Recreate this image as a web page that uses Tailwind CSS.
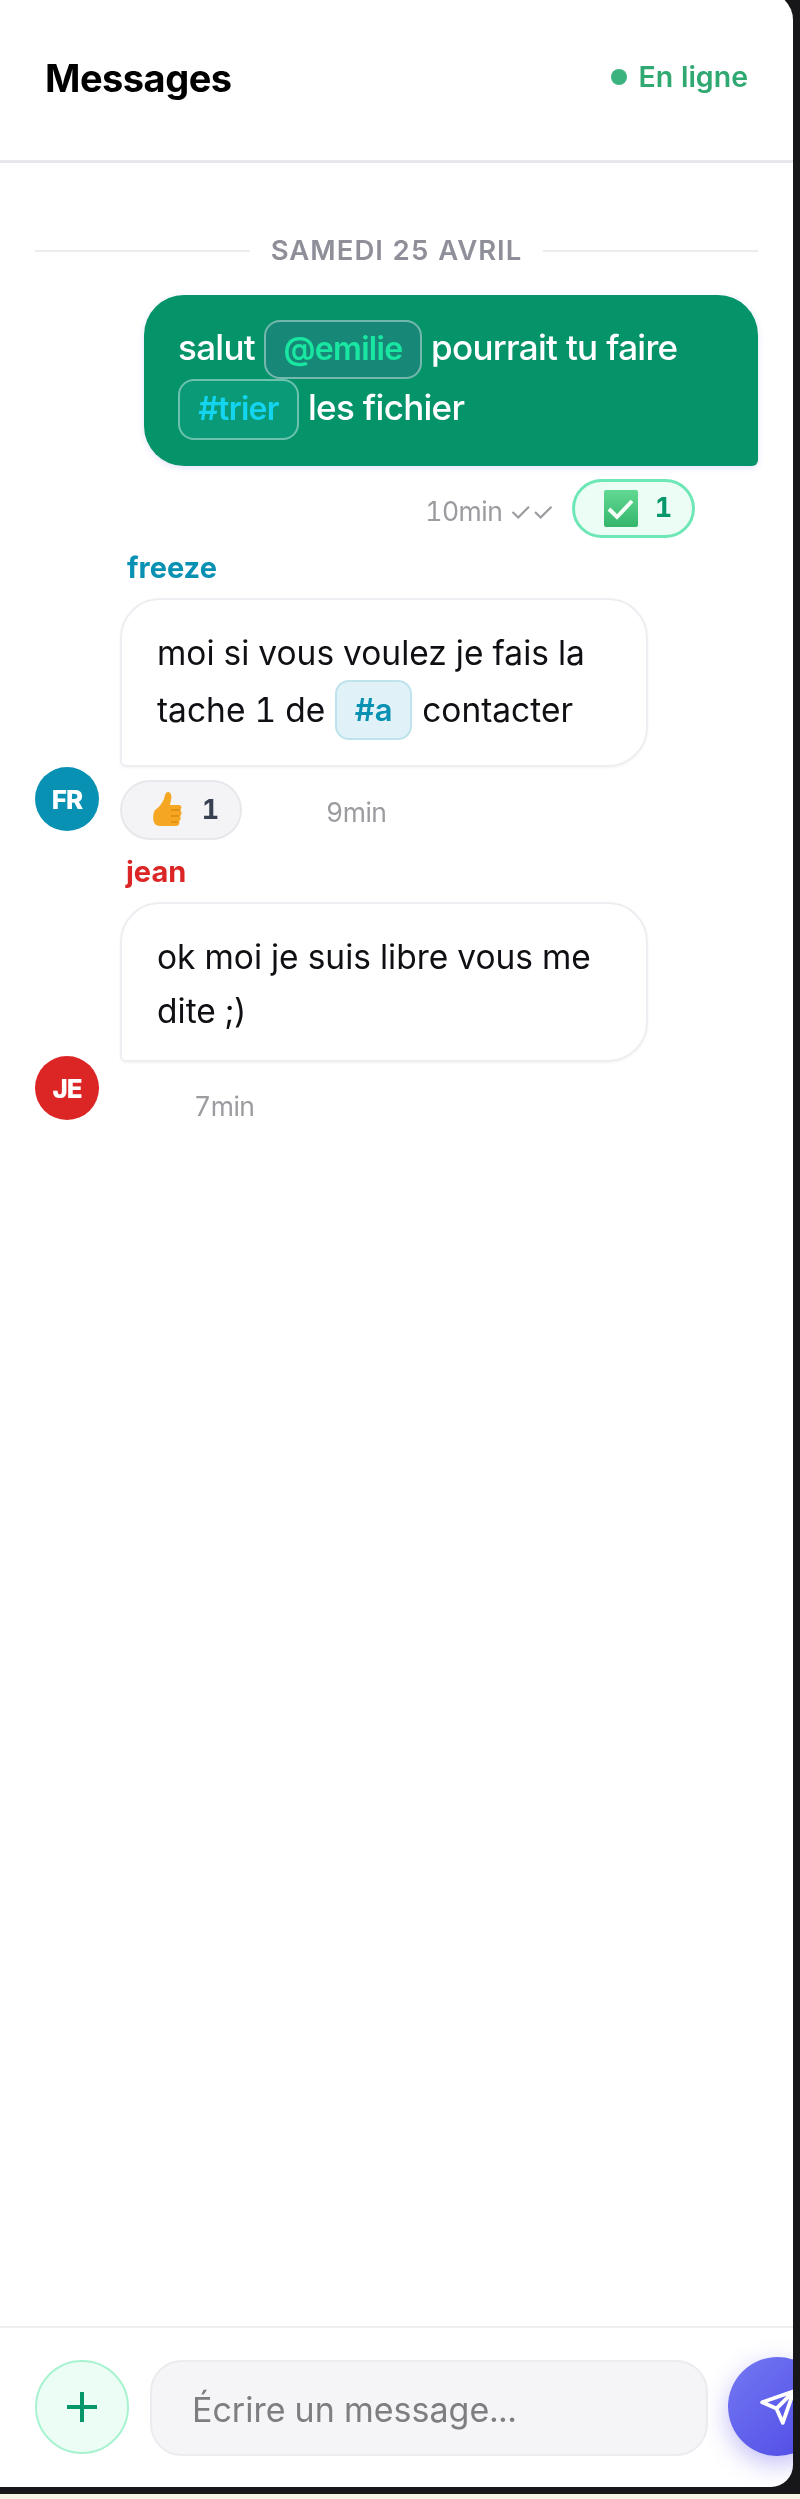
<!DOCTYPE html>
<html lang="en">
<head>
  <meta charset="UTF-8" />
  <title>Messages</title>
  <script src="https://cdn.jsdelivr.net/npm/@tailwindcss/browser@4"></script>
</head>
<body class="bg-[#f4f4e4] font-['Inter',sans-serif] tabular-nums">
 <div class="w-[800px] h-[2499px] overflow-hidden">
  <!-- frame runs past the window on the top and left so the blur has no pale fringe there -->
  <div class="-mt-[8px] -ml-[8px] h-[2502px] w-[816px] bg-[#17171a] blur-[0.7px]">
    <div class="h-[2495px] w-[801px] pt-[8px] pl-[8px] bg-white rounded-tr-[28px] rounded-br-[22px] flex flex-col overflow-hidden">

      <!-- Header -->
      <header class="h-[163px] shrink-0 border-b-[3px] border-[#e8e8ec] pl-[45px] pr-[45px] pb-[3px] flex items-center justify-between">
        <h1 class="text-[38px] font-bold text-black tracking-[-0.5px]">Messages</h1>
        <div class="flex items-center gap-[12px] -mt-[3px] text-[#2fa871] text-[28.5px] font-semibold">
          <span class="w-[16px] h-[16px] rounded-full bg-[#3bb37f]"></span>
          En ligne
        </div>
      </header>

      <!-- Messages -->
      <main class="flex-1 px-[35px] pt-[72px]">
        <div class="flex items-center gap-[21px] h-[32px]">
          <div class="flex-1 h-[2px] bg-[#ececf0]"></div>
          <span class="text-[27.5px] font-semibold tracking-[1px] text-[#8f8f99]">SAMEDI 25 AVRIL</span>
          <div class="flex-1 h-[2px] bg-[#ececf0]"></div>
        </div>

        <!-- mine -->
        <div class="flex flex-col items-end mt-[28px]">
          <div class="w-[614px] h-[171px] pl-[34px] pr-[20px] pt-[22px] bg-[#05946a] rounded-[40px] rounded-br-[6px] text-white text-[35px] font-medium leading-[60px] tracking-[-0.7px] shadow-[0_2px_6px_rgba(99,102,241,0.18)]">
            <div class="flex items-center gap-[9px] h-[60px] whitespace-nowrap">salut
              <span class="mt-[4px] inline-flex items-center justify-center w-[158px] h-[59px] rounded-[16px] border-2 border-white/40 bg-[#178877] text-[#19e6a0] text-[32px] font-semibold">@emilie</span>
              pourrait tu faire</div>
            <div class="flex items-center gap-[9px] h-[60px] whitespace-nowrap">
              <span class="mt-[4px] inline-flex items-center justify-center w-[121px] h-[61px] rounded-[16px] border-2 border-white/40 bg-[#0b9a78] text-[#14d4f0] text-[32px] font-semibold">#trier</span>
              les fichier</div>
          </div>
          <div class="flex items-center mt-[13px] pr-[63px]">
            <span class="text-[26.5px] tracking-[-0.5px] text-[#9b9ba0] mr-[18px] pt-[7px]">10min <span class="text-[26px]">✓✓</span></span>
            <div class="w-[123px] h-[59px] pl-[9px] rounded-full border-[3px] border-[#6ee7b7] bg-[#ecfdf5] flex items-center justify-center gap-[17px]">
              <svg class="w-[34px] h-[37px]" viewBox="0 0 34 37">
                <defs><linearGradient id="chk" x1="0" y1="0" x2="0" y2="1"><stop offset="0" stop-color="#62d992"/><stop offset="1" stop-color="#35b56c"/></linearGradient></defs>
                <rect width="34" height="37" rx="2" fill="url(#chk)"/>
                <path d="M5 19l8 8L28 11" fill="none" stroke="#f4fff8" stroke-width="4"/>
              </svg>
              <span class="text-[27px] font-bold text-[#059669]">1</span>
            </div>
          </div>
        </div>

        <!-- freeze -->
        <div class="mt-[15px]">
          <div class="ml-[92px] text-[29px] leading-[30px] font-bold text-[#0891b2]">freeze</div>
          <div class="flex gap-[21px] mt-[15px]">
            <div class="w-[64px] shrink-0 flex items-start pt-[169px]">
              <div class="w-[64px] h-[64px] rounded-full bg-[#0891b2] text-white text-[26px] font-extrabold tracking-[-1px] flex items-center justify-center">FR</div>
            </div>
            <div>
              <div class="w-[528px] h-[169px] pl-[35px] pt-[26px] border-2 border-[#eeeef2] rounded-[40px] rounded-bl-[6px] text-[33.5px] leading-[54px] text-[#101014] shadow-[0_1px_3px_rgba(0,0,0,0.05)]">
                <div class="whitespace-nowrap">moi si vous voulez je fais la</div>
                <div class="flex items-center gap-[10px] whitespace-nowrap">tache 1 de
                  <span class="inline-flex items-center justify-center w-[77px] h-[60px] rounded-[14px] border-2 border-[#bfe3ec] bg-[#e0f2f7] text-[#0891b2] text-[31px] font-semibold">#a</span>
                  contacter</div>
              </div>
              <div class="flex items-center mt-[13px]">
                <div class="w-[122px] h-[60px] pl-[9px] rounded-full border-2 border-[#e8e8ec] bg-[#f4f4f6] flex items-center justify-center gap-[19px]">
                  <svg class="w-[31px] h-[38px]" viewBox="0 0 31 38">
                    <path d="M3 19c3-2 7-6 9-11 1-3 1-7 4-7 3 0 4 4 3 8l-1 5h9c3 0 3 4 1 5 2 1 2 5 0 6 1 1 1 5-1 5 1 2 0 5-3 5H12c-3 0-6 0-8-1-3-2-4-10-1-15z" fill="#f5a623"/>
                    <path d="M19 19h9M19 25h8M19 31h7" stroke="#dd8a12" stroke-width="1.5" fill="none"/>
                  </svg>
                  <span class="text-[27px] font-bold text-[#374151]">1</span>
                </div>
                <span class="ml-[84px] pt-[6px] text-[26.5px] tracking-[-0.5px] text-[#9b9ba0]">9min</span>
              </div>
            </div>
          </div>
        </div>

        <!-- jean -->
        <div class="mt-[17px]">
          <div class="ml-[91px] text-[29px] leading-[30px] font-bold text-[#dc2626]">jean</div>
          <div class="flex gap-[21px] mt-[15px]">
            <div class="w-[64px] shrink-0 pt-[154px]">
              <div class="w-[64px] h-[64px] rounded-full bg-[#dc2626] text-white text-[26px] font-extrabold tracking-[-1px] flex items-center justify-center">JE</div>
            </div>
            <div>
              <div class="w-[528px] h-[160px] pl-[35px] pt-[26px] border-2 border-[#eeeef2] rounded-[40px] rounded-bl-[6px] text-[33.5px] leading-[54px] text-[#101014] shadow-[0_1px_3px_rgba(0,0,0,0.05)]">
                <div class="whitespace-nowrap">ok moi je suis libre vous me</div>
                <div>dite ;)</div>
              </div>
              <div class="ml-[74px] mt-[28px] text-[26.5px] tracking-[-0.5px] text-[#9b9ba0] leading-[32px]">7min</div>
            </div>
          </div>
        </div>
      </main>

      <!-- Input bar -->
      <footer class="h-[161px] shrink-0 border-t-2 border-[#eeeef1] pl-[35px] flex items-start pt-[32px]">
        <button class="w-[94px] h-[94px] shrink-0 rounded-full border-2 border-[#a7f3d0] bg-[#ecfdf5] flex items-center justify-center">
          <svg class="w-[36px] h-[36px]" viewBox="0 0 36 36" fill="none" stroke="#059669" stroke-width="4"><path d="M18 3v30M3 18h30"/></svg>
        </button>
        <div class="ml-[21px] w-[558px] h-[96px] shrink-0 rounded-[32px] border-2 border-[#ececf0] bg-[#f5f5f7] pl-[40px] pt-[2px] flex items-center text-[34px] text-[#7d7d82]">Écrire un message...</div>
        <button class="ml-[20px] -mt-[3px] w-[99px] h-[99px] shrink-0 rounded-full bg-linear-to-br from-[#7478f2] to-[#4f46e5] shadow-[0_8px_24px_rgba(79,70,229,0.35)] flex items-center justify-center">
          <svg class="w-[38px] h-[38px]" viewBox="0 0 24 24" fill="none" stroke="white" stroke-width="2.4" stroke-linejoin="round" stroke-linecap="round"><path d="M22 2L11 13M22 2l-7 20-4-9-9-4z"/></svg>
        </button>
      </footer>
    </div>
  </div>
 </div>
</body>
</html>
